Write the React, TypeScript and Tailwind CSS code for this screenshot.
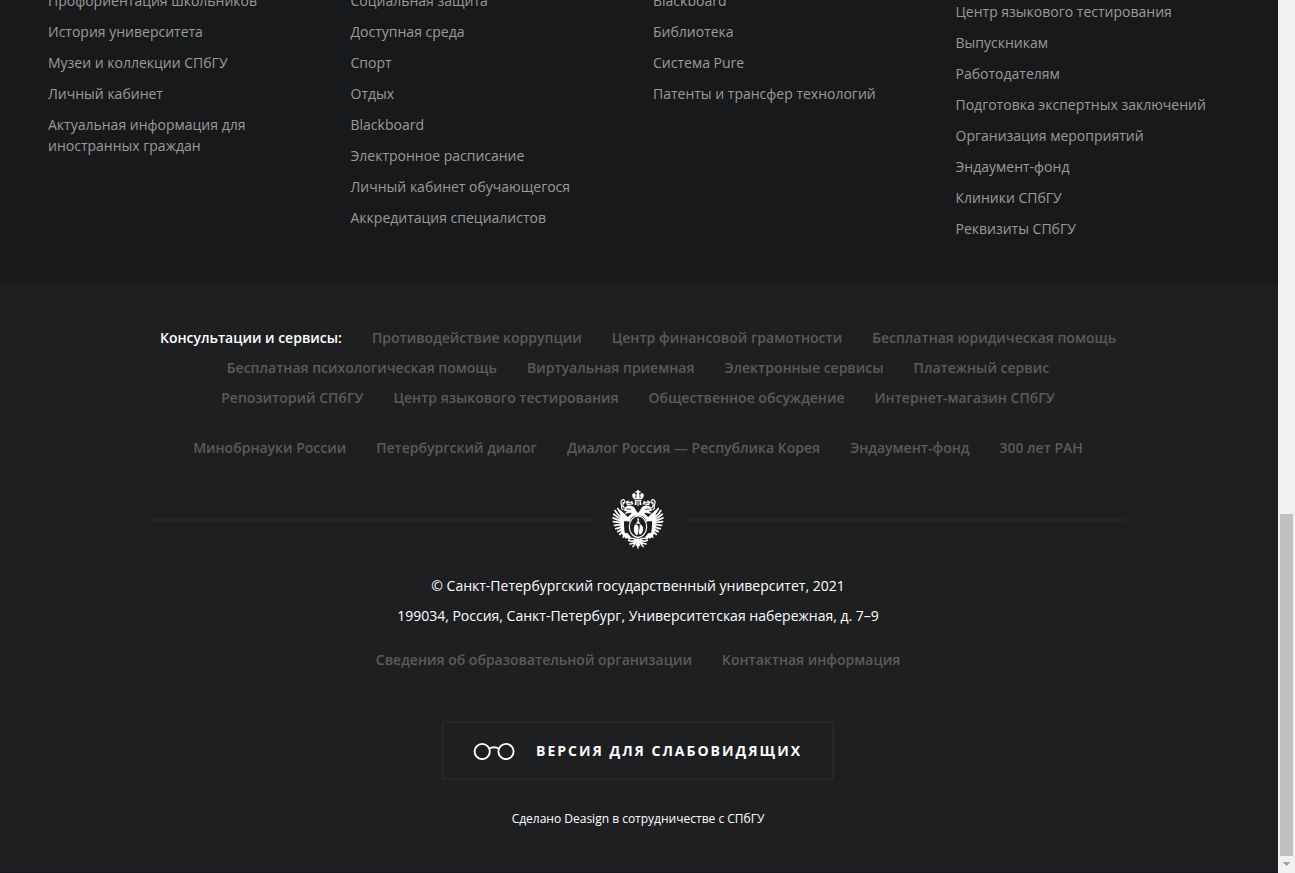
import React from "react";

const columns: { items: string[]; offset: string; width: string }[] = [
  {
    items: ["Профориентация школьников", "История университета", "Музеи и коллекции СПбГУ", "Личный кабинет", "Актуальная информация для иностранных граждан"],
    offset: "-mt-[10px]",
    width: "w-[220px]",
  },
  {
    items: ["Социальная защита", "Доступная среда", "Спорт", "Отдых", "Blackboard", "Электронное расписание", "Личный кабинет обучающегося", "Аккредитация специалистов"],
    offset: "-mt-[10px]",
    width: "w-[270px]",
  },
  {
    items: ["Blackboard", "Библиотека", "Система Pure", "Патенты и трансфер технологий"],
    offset: "-mt-[10px]",
    width: "w-[270px]",
  },
  {
    items: ["Центр языкового тестирования", "Выпускникам", "Работодателям", "Подготовка экспертных заключений", "Организация мероприятий", "Эндаумент-фонд", "Клиники СПбГУ", "Реквизиты СПбГУ"],
    offset: "mt-[1px]",
    width: "w-[270px]",
  },
];

const services: string[][] = [
  ["Противодействие коррупции", "Центр финансовой грамотности", "Бесплатная юридическая помощь"],
  ["Бесплатная психологическая помощь", "Виртуальная приемная", "Электронные сервисы", "Платежный сервис"],
  ["Репозиторий СПбГУ", "Центр языкового тестирования", "Общественное обсуждение", "Интернет-магазин СПбГУ"],
];

const partners = ["Минобрнауки России", "Петербургский диалог", "Диалог Россия — Республика Корея", "Эндаумент-фонд", "300 лет РАН"];

function LinkRow({ items, title }: { items: string[]; title?: string }) {
  return (
    <div className="flex h-[30px] items-center justify-center gap-[30px] whitespace-nowrap text-[14px] font-semibold text-[#5c5b58]">
      {title && <span className="text-white">{title}</span>}
      {items.map((t) => (
        <a key={t}>{t}</a>
      ))}
    </div>
  );
}

function Wing() {
  return (
    <g>
      <path
        d="M82 112 Q68 101 61 86 M80 116 Q62 108 53 92 M79 120 Q60 114 49 103 M78 123 Q60 121 47 114 M77 127 Q62 128 48 125 M76 131 Q64 136 51 136 M75 135 Q68 145 55 146 M75 141 Q71 152 61 155 M76 149 Q73 160 67 163"
        fill="none"
        stroke="white"
        strokeWidth="5.5"
        strokeLinecap="round"
      />
      <path d="M66 88 L88 108 L97 118 L90 126 L78 126 L70 116 Z" />
      <path d="M74 123 L79 123 L82 158 L90 160 L94 164 L100 170 L97 175 L90 173 L85 176 L82 172 L75 175 L76 166 L72 160 L69 138 Z" />
      <path d="M79 124 L97 124 L92 148 L97 161 L82 157 Z" fill="#1e1f21" />
      <path d="M84 159 L86 175 M91 161 L92 175" stroke="white" strokeWidth="3" />
      <path d="M80 93 C80 80 91 74 103 78 C113 80 113 91 121.5 99 L121.5 109 C109 104 99 113 96 127 L86 119 C88 110 98 107 102 99 C95 97 88 103 80 101 L89 94 Z" />
      <path d="M87 87 L100 88" stroke="#1e1f21" strokeWidth="2.5" />
      <path d="M78 90 Q70 86 73 80 L70 66 Q72 58 79 59 L83 66 L78 71 L77 66 L76 77 L81 85" fill="none" stroke="white" strokeWidth="3.5" />
      <path d="M85 66 L92 61 L96 67 L104 62 L108 73 L88 76 Z" />
      <path d="M90 70 L102 70" stroke="#1e1f21" strokeWidth="2" />
      <path
        d="M114 180 Q103 187 93 181 M116 184 Q107 192 97 192 M115 188 L106 200 M118 179 Q107 172 94 176"
        stroke="white"
        strokeWidth="4.5"
        strokeLinecap="round"
        fill="none"
      />
    </g>
  );
}

function Crest() {
  return (
    <svg className="h-[60px] w-[52px] shrink-0" viewBox="43.5 30 156 180" fill="white">
      <Wing />
      <g transform="translate(243 0) scale(-1 1)"><Wing /></g>
      <path d="M119 30 h5 v4 h5 v4 h-5 v4 h-5 v-4 h-5 v-4 h5 Z" />
      <ellipse cx="109.5" cy="46.5" rx="5.5" ry="7.5" />
      <ellipse cx="133.5" cy="46.5" rx="5.5" ry="7.5" />
      <path d="M117 41 h9 v13 h-9 Z M108 53 h27 v4 h-27 Z M111 59 h21 v3 h-21 Z M113 62 h4 v13 h-6 Z M120 62 h3 v16 h-3 Z M126 62 h4 l2 13 h-6 Z" />
      <ellipse cx="121.5" cy="140" rx="26" ry="32" fill="#1e1f21" stroke="white" strokeWidth="3.5" />
      <path d="M121.5 112 l3 5 l-1 6 l5 8 h-13 l5 -8 l-1 -6 Z" />
      <path d="M114 133 Q125 135 123 149 Q123 165 116 166 Q108 158 109 146 Q109 137 114 133 Z" />
      <path d="M127 132 Q138 137 137 149 Q135 161 127 164 Q122 158 126 146 Z" />
      <path d="M121.5 173 l7 8 l-2 10 l3 5 l-5 3 l-3 10 l-3 -10 l-5 -3 l3 -5 l-2 -10 Z" />
    </svg>
  );
}

function Glasses() {
  return (
    <svg className="h-[18px] w-[42px] shrink-0" viewBox="0 0 42 18" fill="none" stroke="white" strokeWidth="1.9">
      <circle cx="9.2" cy="9.5" r="7.6" />
      <circle cx="33" cy="9.5" r="7.6" />
      <path d="M16 6.8 Q21 3.7 26 6.8" />
    </svg>
  );
}

export default function App() {
  return (
    <div className="flex h-[873px] w-[1295px] overflow-hidden bg-[#1e1f21] font-['Open_Sans','Noto_Sans',sans-serif]">
      <footer className="w-[1278px] shrink-0">
        <section className="grid h-[284px] grid-cols-[302.5px_302.5px_302.5px_1fr] overflow-hidden bg-[#18191b] pl-12">
          {columns.map((c, i) => (
            <ul key={i} className={`${c.offset} ${c.width} flex flex-col gap-[10px] text-[14px] leading-[21px] text-[#9c9b98]`}>
              {c.items.map((t) => (
                <li key={t}>{t}</li>
              ))}
            </ul>
          ))}
        </section>
        <section className="flex h-[589px] flex-col items-center border-b border-[#1b151d] pr-[2px] pt-[38px]">
          {services.map((row, i) => (
            <LinkRow key={i} items={row} title={i === 0 ? "Консультации и сервисы:" : undefined} />
          ))}
          <div className="mt-5">
            <LinkRow items={partners} />
          </div>
          <div className="mt-[28px] flex w-[978px] items-center justify-between">
            <div className="h-[2px] w-[444px] bg-[#252629]" />
            <Crest />
            <div className="h-[2px] w-[444px] bg-[#252629]" />
          </div>
          <div className="mt-[21px] text-center text-[14px] leading-[30px] text-white">
            <p>© Санкт-Петербургский государственный университет, 2021</p>
            <p>199034, Россия, Санкт-Петербург, Университетская набережная, д. 7–9</p>
          </div>
          <div className="mt-[13px]">
            <LinkRow items={["Сведения об образовательной организации", "Контактная информация"]} />
          </div>
          <button className="mt-[47px] flex h-[59px] w-[392px] shrink-0 items-center border-2 border-[#252629] pl-[29px] text-white">
            <Glasses />
            <span className="ml-[21px] whitespace-nowrap text-[14px] font-bold tracking-[2px]">ВЕРСИЯ ДЛЯ СЛАБОВИДЯЩИХ</span>
          </button>
          <p className="mt-[30px] text-[12px] leading-[18px] text-white">Сделано Deasign в сотрудничестве с СПбГУ</p>
        </section>
      </footer>
      <aside className="flex w-[17px] flex-col items-center bg-[#f1f1f1] pt-[514px]">
        <div className="h-[342px] w-[13px] bg-[#c1c1c1]" />
        <svg className="mt-[6px] h-[4px] w-[7px]" viewBox="0 0 7 4" fill="#a3a3a3" shapeRendering="crispEdges">
          <path d="M0 0h7v1H0zM1 1h5v1H1zM2 2h3v1H2zM3 3h1v1H3z" />
        </svg>
      </aside>
    </div>
  );
}
